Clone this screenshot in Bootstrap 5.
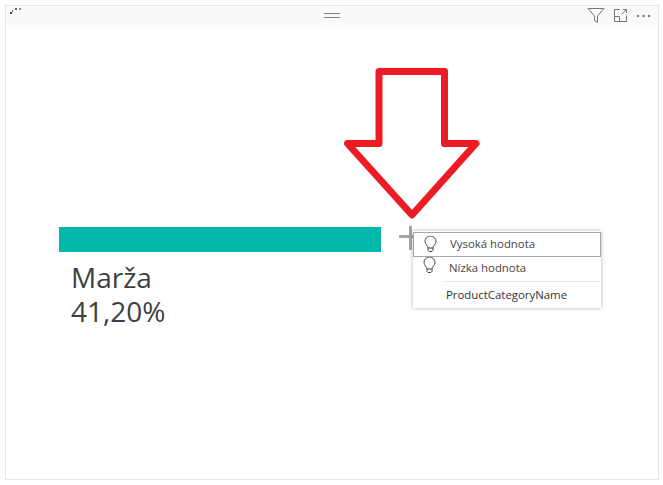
<!DOCTYPE html>
<html lang="en">
<head>
  <meta charset="UTF-8" />
  <meta name="viewport" content="width=device-width, initial-scale=1.0"/>
  <title>Marža</title>
  <link href="https://cdn.jsdelivr.net/npm/bootstrap@5.3.3/dist/css/bootstrap.min.css" rel="stylesheet" />
  <style>
    body { background: #fff; font-family: "Open Sans", sans-serif; color: #333; }
    .page-wrap { width: 663px; height: 485px; padding: 5px 4px 5px 5px; }
    .visual-frame { height: 475px; border: 1px solid #e6e6e6; }
    .visual-head { height: 19px; background: #fafafa; }
    .grip { width: 16px; height: 5px; border-top: 1px solid #808080; border-bottom: 1px solid #808080; }
    .head-tools { left: 581px; top: 0; }
    .visual-body { height: 454px; }
    .kpi-box { padding: 202px 0 0 53px; }
    .kpi-bar { width: 322px; height: 25px; background: #01b8aa; }
    .kpi-text { padding: 8px 0 0 12px; font-size: 28px; line-height: 34px; color: #404040; }
    .red-arrow { left: 336px; top: 39px; }
    .drop-plus { left: 392px; top: 201px; }
    .field-menu { left: 407px; top: 206px; width: 188px; height: 77px; background: #fff; box-shadow: 0 0 4px rgba(0,0,0,.3); font-size: 11.4px; color: #444; }
    .field-row { height: 23px; padding-left: 9px; }
    .field-row.is-active { height: 25px; border: 1px solid #a6a6a6; margin-top: 1px; padding-left: 9px; }
    .field-label { margin-left: 12px; padding-bottom: 2px; }
    .menu-sep { margin-left: 31px; margin-right: 2px; margin-top: 1px; border-top: 1px solid #e6e6e6; }
    .plain-row { height: 27px; padding: 0 0 2px 33px; color: #333; }
  </style>
</head>
<body>
  <div class="page-wrap">
    <div class="visual-frame">
      <div class="visual-head position-relative d-flex align-items-center justify-content-center">
        <!-- loading dots, top left -->
        <svg class="position-absolute" style="left:3px;top:0" width="14" height="9" viewBox="0 0 14 9">
          <rect x="1" y="6" width="2" height="2" fill="#444"/>
          <rect x="3" y="4" width="1" height="2" fill="#666"/>
          <rect x="6" y="2" width="2" height="2" fill="#666"/>
          <rect x="10" y="2" width="2" height="2" fill="#888"/>
        </svg>
        <div class="grip"></div>
        <div class="head-tools position-absolute d-flex align-items-start">
          <svg width="18" height="19" viewBox="0 0 18 19" fill="none" stroke="#777" stroke-width="1">
            <path d="M1 2.500H17L10.500 10V16.500L7.500 14.500V10Z"/>
          </svg>
          <svg class="ms-2" width="15" height="19" viewBox="0 0 15 19" fill="none" stroke="#777" stroke-width="1">
            <path d="M6.500 3.500H1.500V15.500H13.500V9.500M1.500 10.500H6.500V15.500M8.500 8.500L13.500 3.500M10 3.500H13.500V7"/>
          </svg>
          <svg class="ms-2" width="17" height="19" viewBox="0 0 17 19" fill="#777">
            <circle cx="2" cy="10" r="1.200"/><circle cx="7.500" cy="10" r="1.200"/><circle cx="13" cy="10" r="1.200"/>
          </svg>
        </div>
      </div>
      <div class="visual-body position-relative">
        <div class="kpi-box">
          <div class="kpi-bar"></div>
          <div class="kpi-text">
            <div>Marža</div>
            <div>41,20%</div>
          </div>
        </div>

        <!-- hand drawn arrow over the visual -->
        <svg class="red-arrow position-absolute" width="140" height="158" viewBox="0 0 140 158" fill="none">
          <path d="M37 79.500H5.500L70 151L134 79.500H102.500V7.500H37Z" stroke="#ed1c24" stroke-width="7" stroke-linejoin="round"/>
        </svg>

        <svg class="drop-plus position-absolute" width="16" height="24" viewBox="0 0 16 24" fill="#a6a6a6">
          <rect x="1" y="9" width="15" height="3"/>
          <rect x="11" y="0" width="3" height="24"/>
        </svg>

        <div class="field-menu position-absolute">
          <div class="field-row is-active d-flex align-items-center">
            <svg width="15" height="18" viewBox="0 0 15 18" fill="none" stroke="#444" stroke-width="1">
              <path d="M5 12C5 9.500 2 8.500 2 5.500A5.500 5.500 0 0 1 13 5.500C13 8.500 10 9.500 10 12ZM5 12V14.500L6 15.500H9L10 14.500V12"/>
            </svg>
            <span class="field-label">Vysoká hodnota</span>
          </div>
          <div class="field-row d-flex align-items-start">
            <svg width="15" height="18" viewBox="0 0 15 18" fill="none" stroke="#444" stroke-width="1">
              <path d="M5 12C5 9.500 2 8.500 2 5.500A5.500 5.500 0 0 1 13 5.500C13 8.500 10 9.500 10 12ZM5 12V14.500L6 15.500H9L10 14.500V12"/>
            </svg>
            <span class="field-label align-self-center">Nízka hodnota</span>
          </div>
          <div class="menu-sep"></div>
          <div class="plain-row d-flex align-items-center">ProductCategoryName</div>
        </div>
      </div>
    </div>
  </div>
  <script src="https://cdn.jsdelivr.net/npm/bootstrap@5.3.3/dist/js/bootstrap.bundle.min.js"></script>
</body>
</html>
